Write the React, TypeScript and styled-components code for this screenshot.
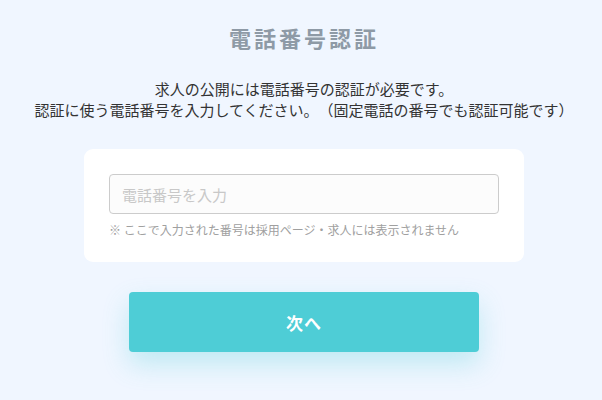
import React from "react";
import styled, { createGlobalStyle } from "styled-components";

const GlobalStyle = createGlobalStyle`
  html, body {
    margin: 0;
    padding: 0;
    background: #f0f6ff;
  }
  body {
    font-family: "Noto Sans CJK JP", "Noto Sans", sans-serif;
  }
`;

const Page = styled.main`
  min-height: 400px;
  box-sizing: border-box;
  padding: 22px 0 0 6px;
  display: flex;
  flex-direction: column;
  align-items: center;
`;

const Title = styled.h1`
  margin: 0;
  font-size: 22px;
  line-height: 30px;
  font-weight: 700;
  letter-spacing: 3px;
  color: #8e9aa6;
`;

const Lead = styled.p`
  margin: 26px 0 0;
  font-size: 15px;
  line-height: 21px;
  color: #333333;
  text-align: center;
  white-space: nowrap;
  text-spacing-trim: space-all;
`;

const Card = styled.section`
  margin-top: 29px;
  width: 440px;
  box-sizing: border-box;
  padding: 25px 25px 23px;
  background: #ffffff;
  border-radius: 9px;
`;

const PhoneInput = styled.input`
  display: block;
  width: 100%;
  height: 40px;
  box-sizing: border-box;
  padding: 0 12px;
  border: 1px solid #cccccc;
  border-radius: 4px;
  background: #fcfcfc;
  font-family: inherit;
  font-size: 15px;
  color: #333;
  outline: none;
  &::placeholder {
    color: #c8c8c8;
  }
`;

const Note = styled.p`
  margin: 7px 0 0;
  font-size: 12px;
  line-height: 18px;
  color: #a0a0a0;
`;

const NextButton = styled.button`
  margin-top: 30px;
  width: 350px;
  height: 60px;
  border: none;
  border-radius: 4px;
  background: #4ecdd6;
  color: #ffffff;
  font-family: inherit;
  font-size: 17px;
  font-weight: 700;
  letter-spacing: 1px;
  box-shadow: 0 12px 26px rgba(78, 205, 214, 0.3);
  cursor: pointer;
`;

export default function App() {
  return (
    <>
      <GlobalStyle />
      <Page>
        <Title>電話番号認証</Title>
        <Lead>
          求人の公開には電話番号の認証が必要です。
          <br />
          認証に使う電話番号を入力してください。（固定電話の番号でも認証可能です）
        </Lead>
        <Card>
          <PhoneInput type="tel" placeholder="電話番号を入力" />
          <Note>※ ここで入力された番号は採用ページ・求人には表示されません</Note>
        </Card>
        <NextButton type="button">次へ</NextButton>
      </Page>
    </>
  );
}
